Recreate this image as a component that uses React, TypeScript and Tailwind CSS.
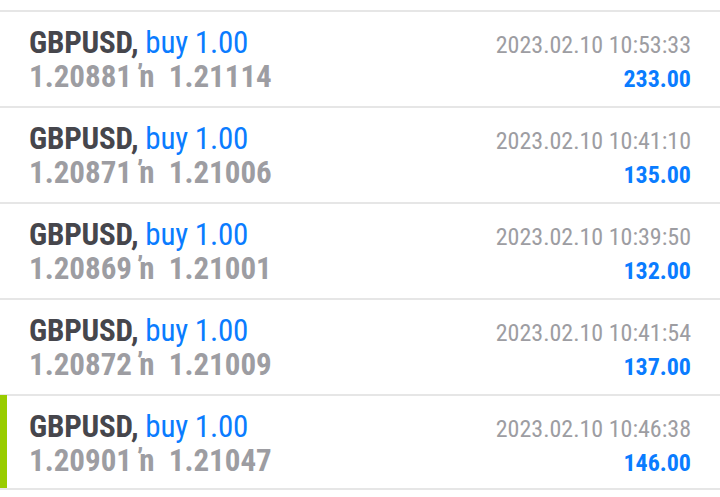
import React from "react";

type Row = { open: string; close: string; time: string; profit: string; active?: boolean };

const rows: Row[] = [
  { open: "1.20881", close: "1.21114", time: "2023.02.10 10:53:33", profit: "233.00" },
  { open: "1.20871", close: "1.21006", time: "2023.02.10 10:41:10", profit: "135.00" },
  { open: "1.20869", close: "1.21001", time: "2023.02.10 10:39:50", profit: "132.00" },
  { open: "1.20872", close: "1.21009", time: "2023.02.10 10:41:54", profit: "137.00" },
  { open: "1.20901", close: "1.21047", time: "2023.02.10 10:46:38", profit: "146.00", active: true },
];

export default function App() {
  return (
    <div
      className="w-[720px] h-[497px] bg-white overflow-hidden pt-[10px] font-stretch-condensed"
      style={{ fontFamily: '"Roboto Condensed", Roboto, "Liberation Sans", sans-serif' }}
    >
      {rows.map((r, i) => (
        <div key={i} className={`relative border-t-2 border-[#e6e6e6] h-[96px] pl-[29px] pr-[29px] pt-[14px] ${i === rows.length - 1 ? "border-b-2" : ""}`}>
          {r.active && <div className="absolute left-0 top-[-1px] bottom-0 w-[7px] bg-[#99cc00]" />}
          <div className="flex justify-between items-baseline h-[34px] leading-[34px]">
            <div className="text-[31px] tracking-[-0.2px]">
              <span className="font-bold text-[#46464c]">GBPUSD,</span>
              <span className="text-[#0a7cff]"> buy 1.00</span>
            </div>
            <div className="text-[24px] text-[#9d9da2]">{r.time}</div>
          </div>
          <div className="flex justify-between items-baseline h-[34px] leading-[34px]">
            <div className="text-[31px] font-bold text-[#9d9da2]">
              {r.open} ŉ&nbsp; {r.close}
            </div>
            <div className="text-[24px] font-bold text-[#0a7cff]">{r.profit}</div>
          </div>
        </div>
      ))}
    </div>
  );
}
